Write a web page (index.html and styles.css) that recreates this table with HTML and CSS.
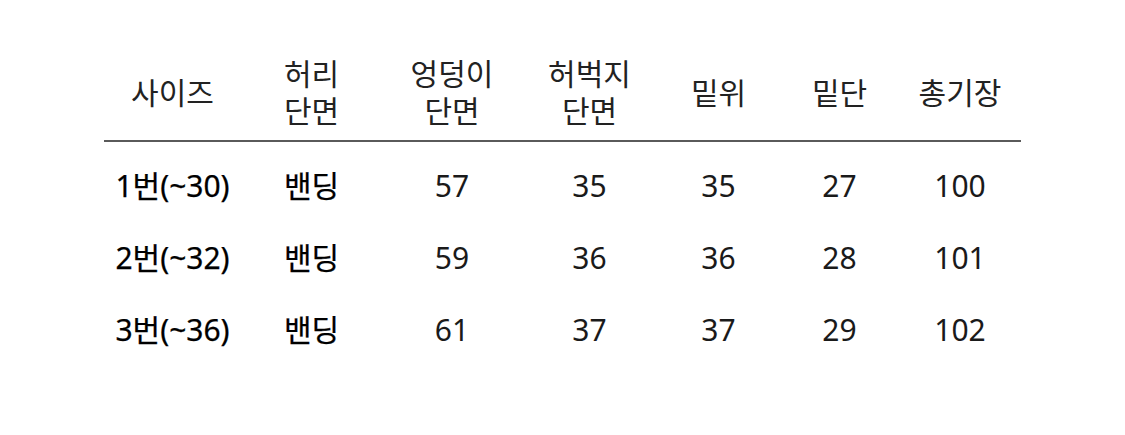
FILE: index.html
```html
<!DOCTYPE html>
<html lang="ko">
<head>
<meta charset="utf-8">
<link rel="stylesheet" href="styles.css">
</head>
<body>
<table class="size-table">
  <colgroup>
    <col class="c1"><col class="c2"><col class="c3"><col class="c4"><col class="c5"><col class="c6"><col class="c7">
  </colgroup>
  <thead>
    <tr>
      <th>사이즈</th>
      <th>허리<br>단면</th>
      <th>엉덩이<br>단면</th>
      <th>허벅지<br>단면</th>
      <th>밑위</th>
      <th>밑단</th>
      <th>총기장</th>
    </tr>
  </thead>
  <tbody>
    <tr><td class="name">1번(~30)</td><td class="name">밴딩</td><td>57</td><td>35</td><td>35</td><td>27</td><td>100</td></tr>
    <tr><td class="name">2번(~32)</td><td class="name">밴딩</td><td>59</td><td>36</td><td>36</td><td>28</td><td>101</td></tr>
    <tr><td class="name">3번(~36)</td><td class="name">밴딩</td><td>61</td><td>37</td><td>37</td><td>29</td><td>102</td></tr>
  </tbody>
</table>
</body>
</html>
```
FILE: styles.css
```css
html, body {
  margin: 0;
  padding: 0;
  background: #ffffff;
}
body {
  font-family: "Noto Sans", "Noto Sans CJK KR", sans-serif;
  padding: 55px 0 0 104px;
}
.size-table {
  border-collapse: collapse;
  table-layout: fixed;
  width: 917px;
}
.c1 { width: 137px; }
.c2 { width: 141px; }
.c3 { width: 140px; }
.c4 { width: 135px; }
.c5 { width: 123px; }
.c6 { width: 119px; }
.c7 { width: 122px; }
.size-table th {
  font-weight: 400;
  font-size: 30px;
  line-height: 37px;
  color: #222222;
  text-align: center;
  vertical-align: middle;
  padding: 0 0 11px 0;
  border-bottom: 2px solid #5a5a5a;
}
.size-table td {
  font-size: 30px;
  line-height: 36px;
  color: #1a1a1a;
  text-align: center;
  vertical-align: middle;
  height: 72px;
  padding: 0;
}
.size-table tbody tr:first-child td {
  padding-top: 8px;
}
.size-table td.name {
  font-weight: 400;
  color: #000000;
  -webkit-text-stroke: 0.25px #000000;
}
```
